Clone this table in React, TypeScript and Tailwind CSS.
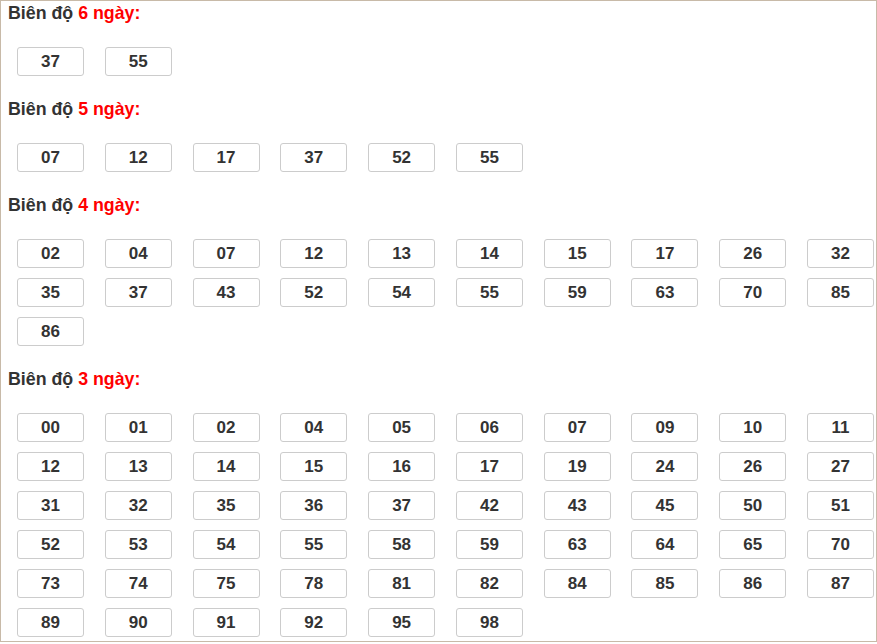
import React from "react";

const sections: { days: string; nums: string[] }[] = [
  { days: "6", nums: ["37", "55"] },
  { days: "5", nums: ["07", "12", "17", "37", "52", "55"] },
  {
    days: "4",
    nums: ["02", "04", "07", "12", "13", "14", "15", "17", "26", "32", "35", "37", "43", "52", "54", "55", "59", "63", "70", "85", "86"],
  },
  {
    days: "3",
    nums: [
      "00", "01", "02", "04", "05", "06", "07", "09", "10", "11",
      "12", "13", "14", "15", "16", "17", "19", "24", "26", "27",
      "31", "32", "35", "36", "37", "42", "43", "45", "50", "51",
      "52", "53", "54", "55", "58", "59", "63", "64", "65", "70",
      "73", "74", "75", "78", "81", "82", "84", "85", "86", "87",
      "89", "90", "91", "92", "95", "98",
    ],
  },
];

export default function App() {
  return (
    <div
      className="w-[877px] h-[642px] border border-[#c8baa8] bg-white text-[#333]"
      style={{ fontFamily: '"Liberation Sans", Arial, sans-serif' }}
    >
      {sections.map((s, i) => (
        <div key={i} className={i === 0 ? "" : "mt-[21px]"}>
          <div className="pl-[7px] text-[17.8px] leading-[24px] font-bold">
            Biên độ <span className="text-[#ff0000]">{s.days} ngày:</span>
          </div>
          <div className="mt-[22px] ml-[16px] w-[857px] grid grid-cols-10 gap-x-[20.8px] gap-y-[10px]">
            {s.nums.map((n, j) => (
              <div
                key={j}
                className="h-[29px] border border-[#cccccc] rounded-[3px] text-center text-[17px] leading-[27px] font-bold"
              >
                {n}
              </div>
            ))}
          </div>
        </div>
      ))}
    </div>
  );
}
